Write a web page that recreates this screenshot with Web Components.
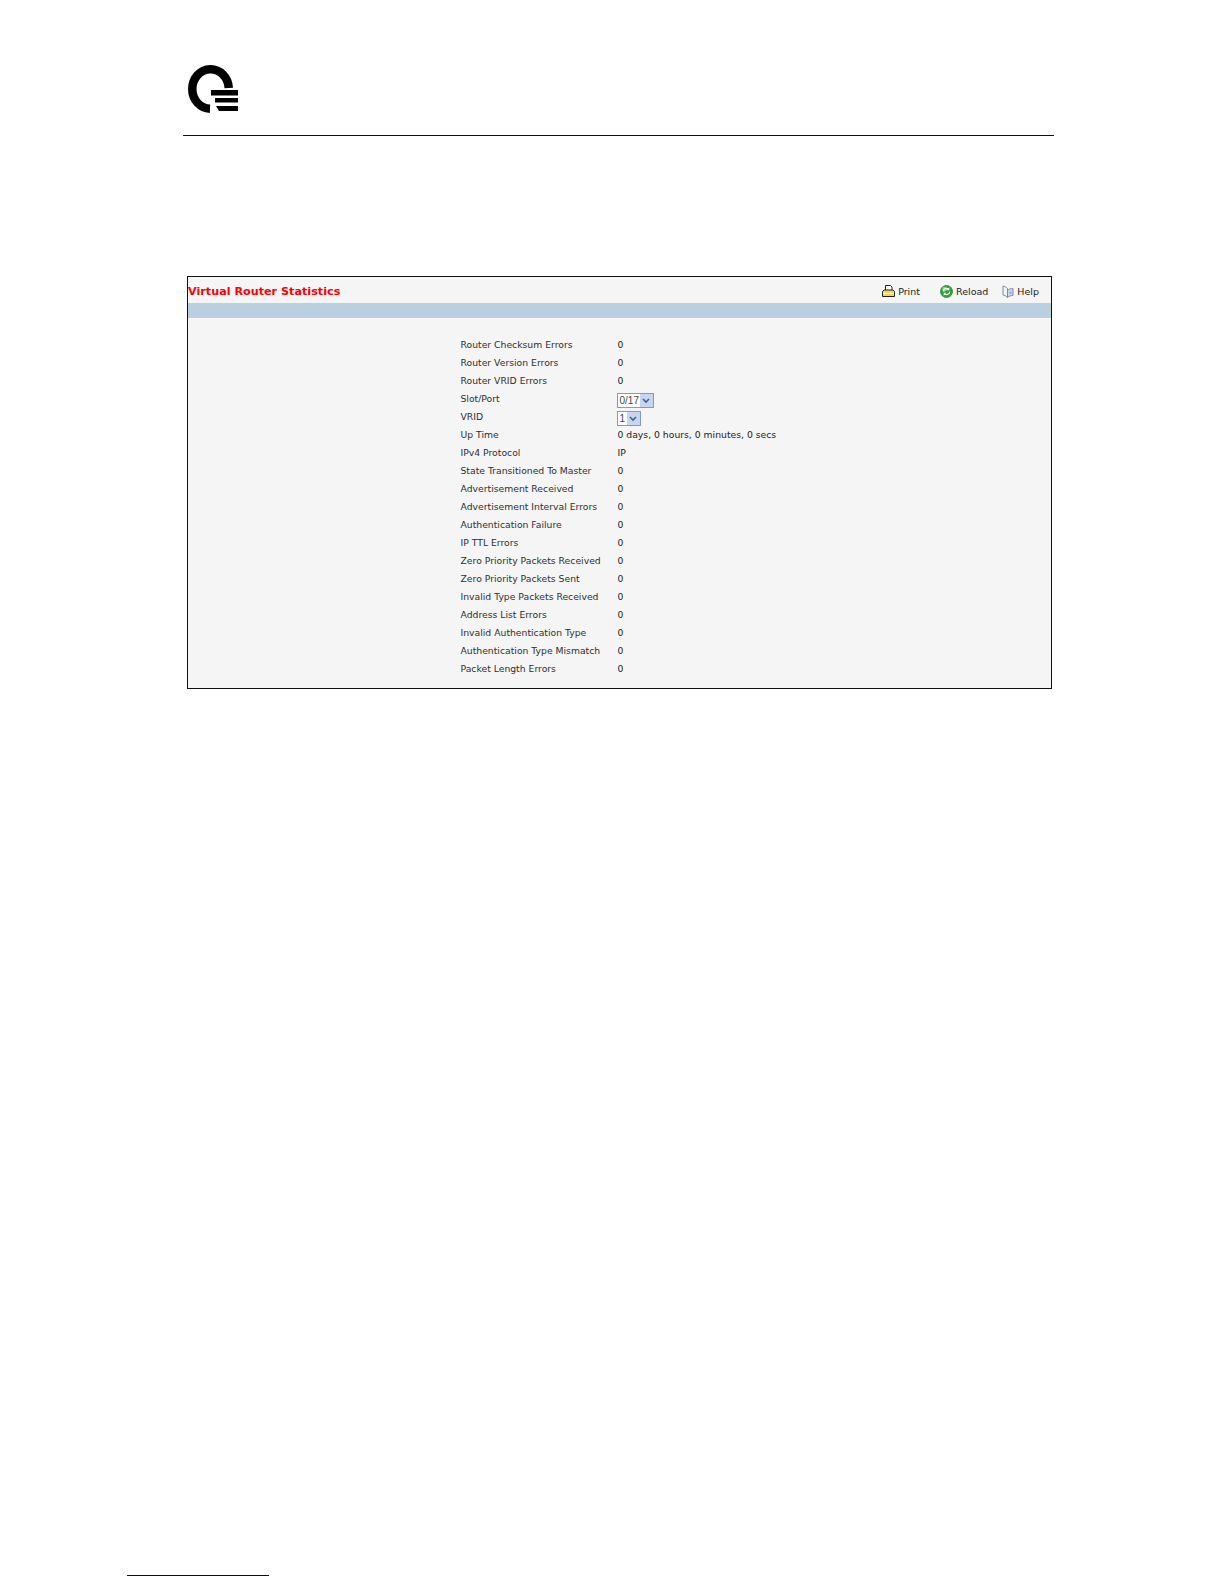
<!DOCTYPE html>
<html>
<head>
<meta charset="utf-8">
<title>Virtual Router Statistics</title>
<style>
html, body { margin: 0; background: #fff; }
</style>
</head>
<body>
<manual-page>
  <stats-panel heading="Virtual Router Statistics">
    <tool-link slot="tools" icon="print" style="margin-right:6px">Print</tool-link>
    <tool-link slot="tools" icon="reload">Reload</tool-link>
    <tool-link slot="tools" icon="help">Help</tool-link>
    <stat-row label="Router Checksum Errors">0</stat-row>
    <stat-row label="Router Version Errors">0</stat-row>
    <stat-row label="Router VRID Errors">0</stat-row>
    <stat-row label="Slot/Port"><drop-down value="0/17" width="37"></drop-down></stat-row>
    <stat-row label="VRID"><drop-down value="1" width="24"></drop-down></stat-row>
    <stat-row label="Up Time">0 days, 0 hours, 0 minutes, 0 secs</stat-row>
    <stat-row label="IPv4 Protocol">IP</stat-row>
    <stat-row label="State Transitioned To Master">0</stat-row>
    <stat-row label="Advertisement Received">0</stat-row>
    <stat-row label="Advertisement Interval Errors">0</stat-row>
    <stat-row label="Authentication Failure">0</stat-row>
    <stat-row label="IP TTL Errors">0</stat-row>
    <stat-row label="Zero Priority Packets Received">0</stat-row>
    <stat-row label="Zero Priority Packets Sent">0</stat-row>
    <stat-row label="Invalid Type Packets Received">0</stat-row>
    <stat-row label="Address List Errors">0</stat-row>
    <stat-row label="Invalid Authentication Type">0</stat-row>
    <stat-row label="Authentication Type Mismatch">0</stat-row>
    <stat-row label="Packet Length Errors">0</stat-row>
  </stats-panel>
</manual-page>

<script>
var icons = {
  print: `<svg width="13" height="12" viewBox="0 0 13 12">
    <path d="M3.500 .5h5l1.500 1.500v3.500H3.500z" fill="#fff" stroke="#222"/>
    <path d="M.5 6.500l1.500-1.500h9l1.500 1.500v5H.5z" fill="#f4d35e" stroke="#222"/>
    <path d="M1 8.500h11" stroke="#fff"/>
  </svg>`,
  reload: `<svg width="13" height="13" viewBox="0 0 14 14">
    <circle cx="7" cy="7" r="6.500" fill="#2f9e3a" stroke="#3f8f4a"/>
    <circle cx="5" cy="4.500" r="2.500" fill="#8ed87e"/>
    <path d="M3.500 7a3.500 3.500 0 0 1 5.500-2.800M10.500 7a3.500 3.500 0 0 1-5.500 2.800" fill="none" stroke="#fff" stroke-width="1.200"/>
    <path d="M10 2.500v3.200H7zM4 11.500V8.300h3z" fill="#fff"/>
  </svg>`,
  help: `<svg width="12" height="13" viewBox="0 0 12 13">
    <path d="M1 1c1.500 .2 3 1 4.500 2.500v9C4 11 2.500 10.200 1 10z" fill="#f0f2f8" stroke="#7c88a4"/>
    <path d="M11 3.500c-2 0-4 .5-5.500 2v7c1.500-1.500 3.500-2 5.500-2z" fill="#cfd8ea" stroke="#7c88a4"/>
    <path d="M7.500 7l2-.5v2l-2 .5z" fill="#8fa0c0"/>
  </svg>`
};

class ManualPage extends HTMLElement {
  constructor() {
    super();
    var root = this.attachShadow({ mode: "open" });
    root.innerHTML = `
<style>
:host {
  display: block;
  position: relative;
  height: 1584px;
  overflow: hidden;
  box-sizing: border-box;
  padding: 65px 170px 0 183px;
  font-family: "DejaVu Sans", Verdana, sans-serif;
}
.logo { display: block; margin-left: 5px; }
hr {
  height: 1px;
  margin: 21px 0 0;
  border: 0;
  background: #111;
}
.content { margin: 140px 2px 0 4px; }
.foot {
  position: absolute;
  left: 127px;
  top: 1575px;
  width: 142px;
  height: 1px;
  background: #000080;
}
</style>
<svg class="logo" width="50" height="49" viewBox="0 0 50 49">
  <path d="M40.750 23A18.250 19.750 0 1 0 22 43.750" fill="none" stroke="#000" stroke-width="8.500"/>
  <path d="M23 25h27v5.500H23zM27 33h23v4.500H27zM28 41h22v5H31z" fill="#000"/>
</svg>
<hr>
<div class="content"><slot></slot></div>
<div class="foot"></div>
`;
  }
}

class StatsPanel extends HTMLElement {
  constructor() {
    super();
    var root = this.attachShadow({ mode: "open" });
    root.innerHTML = `
<style>
:host {
  display: block;
  box-sizing: border-box;
  height: 413px;
  border: 1px solid #111;
  background: #f5f5f5;
}
.top {
  display: flex;
  align-items: center;
  justify-content: space-between;
  height: 26px;
  padding: 0 12px 0 0;
}
h1 {
  margin: 0;
  padding-top: 3px;
  font-size: 11.2px;
  font-weight: bold;
  color: #f00;
}
.tools { display: flex; gap: 14px; padding-top: 2px; }
.bar { height: 15px; background: #b8d0e0; }
.rows { padding: 17px 0 0 272.5px; }
</style>
<div class="top">
  <h1 as="heading"></h1>
  <div class="tools"><slot name="tools"></slot></div>
</div>
<div class="bar"></div>
<div class="rows"><slot></slot></div>
`;
    root.querySelector("[as=heading]").textContent = this.getAttribute("heading");
  }
}

class StatRow extends HTMLElement {
  constructor() {
    super();
    var root = this.attachShadow({ mode: "open" });
    root.innerHTML = `
<style>
:host {
  display: flex;
  align-items: center;
  height: 18px;
  font-size: 9.25px;
  color: #2f2f2f;
}
.label { width: 157px; }
.value { color: #222; display: flex; align-items: center; }
</style>
<div class="label" as="label"></div>
<div class="value"><slot></slot></div>
`;
    root.querySelector("[as=label]").textContent = this.getAttribute("label");
  }
}

class ToolLink extends HTMLElement {
  constructor() {
    super();
    var root = this.attachShadow({ mode: "open" });
    root.innerHTML = `
<style>
:host {
  display: inline-flex;
  align-items: center;
  gap: 3px;
  font-size: 9.5px;
  color: #222;
}
</style>
<span as="icon" style="display:flex"></span><slot></slot>
`;
    root.querySelector("[as=icon]").innerHTML = icons[this.getAttribute("icon")];
  }
}

class DropDown extends HTMLElement {
  constructor() {
    super();
    var root = this.attachShadow({ mode: "open" });
    root.innerHTML = `
<style>
:host {
  display: inline-flex;
  align-items: stretch;
  justify-content: space-between;
  box-sizing: border-box;
  height: 15px;
  margin: 5px 0 0 -1px;
  border: 1px solid #7f9db9;
  background: #fff;
  font-family: "Liberation Sans", Arial, sans-serif;
  font-size: 10px;
  line-height: 13px;
  color: #444;
}
span { padding-left: 2px; }
.arrow {
  display: flex;
  align-items: center;
  justify-content: center;
  width: 13px;
  padding: 0;
  background: #c5d5f2;
}
</style>
<span as="text"></span>
<span class="arrow"><svg width="8" height="6" viewBox="0 0 8 6"><path d="M1 1l3 3 3-3" fill="none" stroke="#4d6185" stroke-width="1.600"/></svg></span>
`;
    root.querySelector("[as=text]").textContent = this.getAttribute("value");
    this.style.width = this.getAttribute("width") + "px";
  }
}

window.customElements.define("manual-page", ManualPage);
window.customElements.define("stats-panel", StatsPanel);
window.customElements.define("stat-row", StatRow);
window.customElements.define("tool-link", ToolLink);
window.customElements.define("drop-down", DropDown);
</script>
</body>
</html>
